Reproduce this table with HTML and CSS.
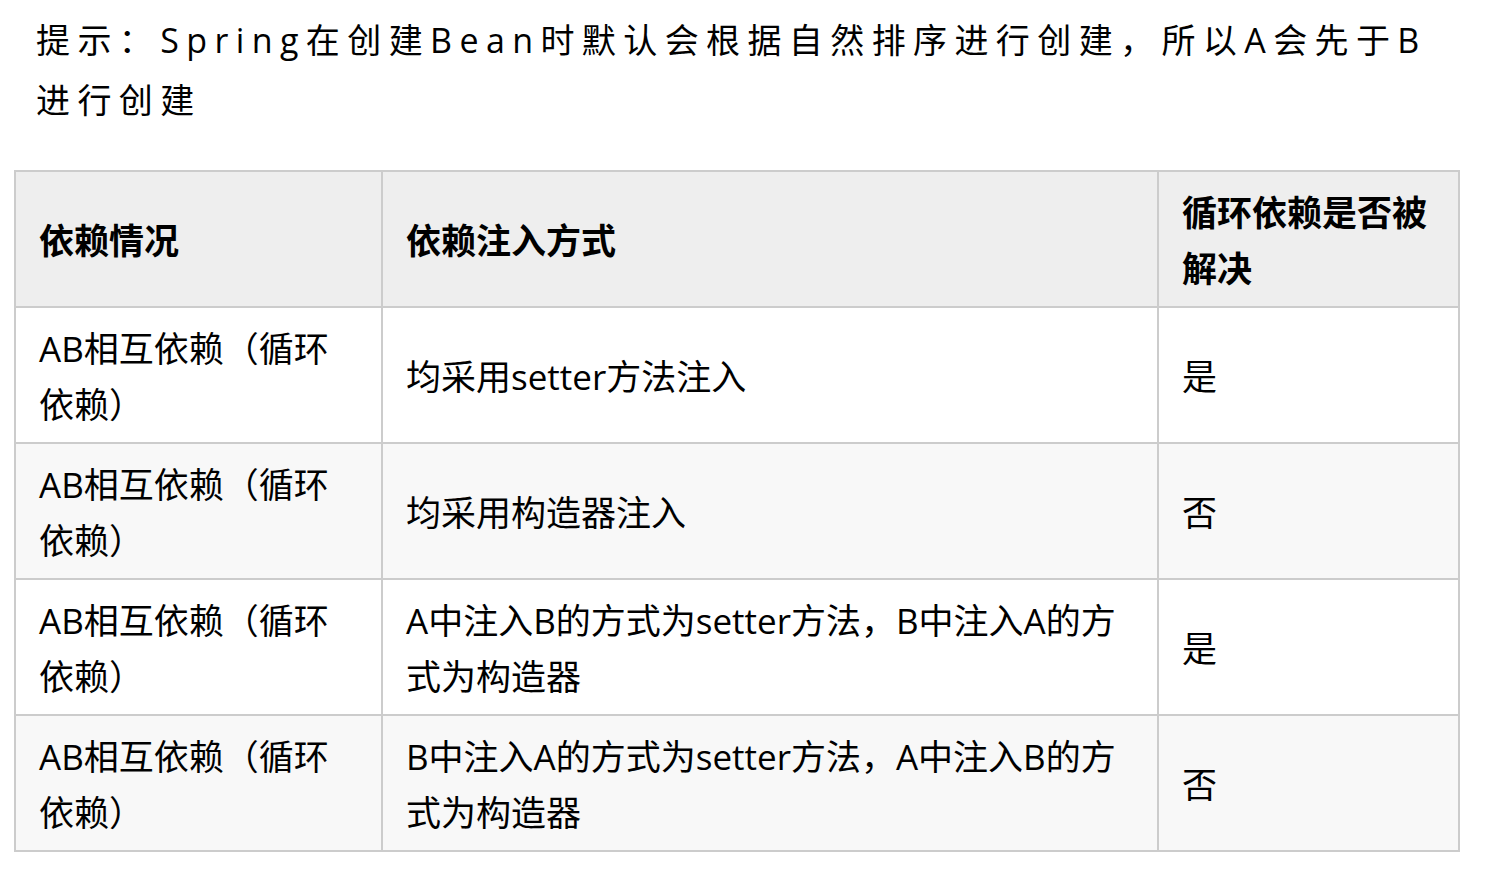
FILE: index.html
```html
<!DOCTYPE html>
<html lang="zh-CN">
<head>
<meta charset="utf-8">
<title>循环依赖</title>
<link rel="stylesheet" href="styles.css">
</head>
<body>
<div class="page">
  <p class="tip">提示：Spring在创建Bean时默认会根据自然排序进行创建，所以A会先于B进行创建</p>
  <table class="dep-table">
    <colgroup>
      <col class="c1">
      <col class="c2">
      <col class="c3">
    </colgroup>
    <thead>
      <tr>
        <th>依赖情况</th>
        <th>依赖注入方式</th>
        <th>循环依赖是否被解决</th>
      </tr>
    </thead>
    <tbody>
      <tr>
        <td>AB相互依赖（循环依赖）</td>
        <td>均采用setter方法注入</td>
        <td>是</td>
      </tr>
      <tr>
        <td>AB相互依赖（循环依赖）</td>
        <td>均采用构造器注入</td>
        <td>否</td>
      </tr>
      <tr>
        <td>AB相互依赖（循环依赖）</td>
        <td>A中注入B的方式为setter方法，B中注入A的方式为构造器</td>
        <td>是</td>
      </tr>
      <tr>
        <td>AB相互依赖（循环依赖）</td>
        <td>B中注入A的方式为setter方法，A中注入B的方式为构造器</td>
        <td>否</td>
      </tr>
    </tbody>
  </table>
</div>
</body>
</html>
```

FILE: styles.css
```css
html, body {
  margin: 0;
  padding: 0;
  background: #ffffff;
}

body {
  font-family: "Open Sans", "Noto Sans CJK SC", sans-serif;
  color: #000000;
}

.page {
  padding: 10px 0 0 0;
}

.tip {
  margin: 0 40px 40px 36px;
  font-size: 34px;
  line-height: 60px;
  letter-spacing: 7.4px;
}

.dep-table {
  margin-left: 14px;
  width: 1444px;
  border-collapse: collapse;
  table-layout: fixed;
  font-size: 35px;
  line-height: 56px;
}

.c1 { width: 367px; }
.c2 { width: 776px; }
.c3 { width: 301px; }

.dep-table th,
.dep-table td {
  border: 2px solid #cccccc;
  padding: 13px 22px 9px 23px;
  text-align: left;
  vertical-align: middle;
}

.dep-table th {
  background: #eeeeee;
  font-weight: 700;
}

.dep-table tbody tr:nth-child(odd) td {
  background: #ffffff;
}

.dep-table tbody tr:nth-child(even) td {
  background: #f8f8f8;
}
```
